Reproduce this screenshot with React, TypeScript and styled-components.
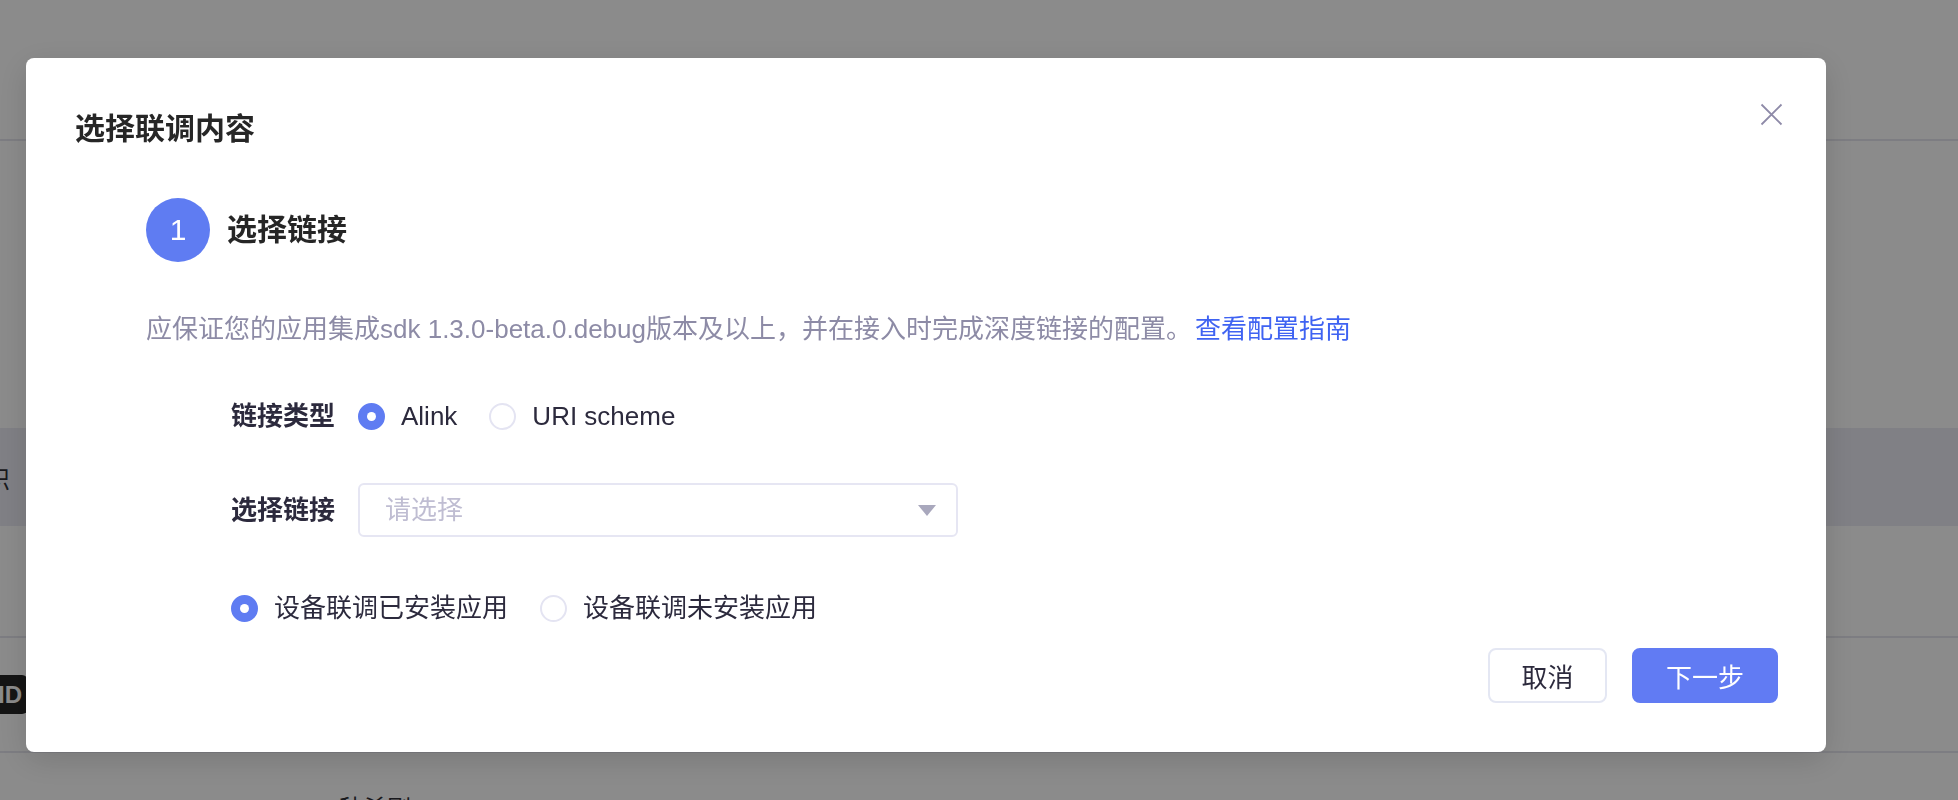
import React from "react";
import styled, { createGlobalStyle } from "styled-components";

const FONT = `"Liberation Sans", "Noto Sans CJK SC", sans-serif`;

const GlobalStyle = createGlobalStyle`
  html, body { margin: 0; padding: 0; background: #ffffff; }
  body { font-family: ${FONT}; overflow: hidden; }
  * { box-sizing: border-box; }
`;

/* ---------- background page ---------- */
const Page = styled.div`
  width: 1958px;
  height: 800px;
  display: flex;
  flex-direction: column;
  background: #ffffff;
  overflow: hidden;
`;

const PageHeader = styled.div`
  height: 141px;
  flex: none;
  border-bottom: 2px solid #e6e6ee;
`;

const PageGap = styled.div<{ $h: number }>`
  height: ${(p) => p.$h}px;
  flex: none;
`;

const TableHead = styled.div`
  height: 98px;
  flex: none;
  background: #ebebf4;
  display: flex;
  align-items: center;
  font-size: 24px;
  color: #2f2f36;
`;

const HeadCell = styled.span`
  margin-left: -38px;
  white-space: nowrap;
`;

const TableRow = styled.div<{ $h: number }>`
  height: ${(p) => p.$h}px;
  flex: none;
  border-bottom: 2px solid #e6e6ee;
  display: flex;
  align-items: center;
`;

const Badge = styled.span`
  margin-left: -48px;
  height: 39px;
  padding: 0 6px 0 10px;
  border-radius: 6px;
  background: #262626;
  color: #ffffff;
  font-weight: 700;
  font-size: 24px;
  line-height: 39px;
`;

const LastRow = styled.div`
  flex: none;
  display: flex;
  padding-top: 40px;
  font-size: 24px;
  line-height: 32px;
  color: #2f2f36;
`;

const Cell = styled.span<{ $w: number }>`
  width: ${(p) => p.$w}px;
  flex: none;
  white-space: nowrap;
`;

const Mask = styled.div`
  position: fixed;
  inset: 0;
  background: rgba(0, 0, 0, 0.455);
`;

/* ---------- modal ---------- */
const Dialog = styled.div`
  position: fixed;
  left: 26px;
  top: 58px;
  width: 1800px;
  height: 694px;
  background: #ffffff;
  border-radius: 8px;
  box-shadow: 0 8px 32px rgba(0, 0, 0, 0.14);
  display: flex;
  flex-direction: column;
  font-family: ${FONT};
`;

const Header = styled.div`
  padding: 50px 0 0 49px;
`;

const Title = styled.h2`
  margin: 0;
  font-size: 30px;
  line-height: 42px;
  font-weight: 600;
  color: #262626;
`;

const CloseButton = styled.button`
  position: absolute;
  top: 45px;
  right: 43px;
  width: 23px;
  height: 23px;
  padding: 0;
  border: none;
  background: transparent;
  cursor: pointer;
  display: flex;
`;

const Body = styled.div`
  padding-left: 120px;
  display: flex;
  flex-direction: column;
`;

const StepRow = styled.div`
  margin-top: 48px;
  display: flex;
  align-items: center;
  gap: 17px;
`;

const StepCircle = styled.div`
  width: 64px;
  height: 64px;
  border-radius: 50%;
  background: #5f7cf2;
  color: #ffffff;
  font-size: 30px;
  display: flex;
  align-items: center;
  justify-content: center;
`;

const StepTitle = styled.div`
  font-size: 30px;
  line-height: 42px;
  font-weight: 600;
  color: #262626;
`;

const Description = styled.p`
  margin: 49px 0 0;
  font-size: 26px;
  line-height: 36px;
  color: #8d8ba6;
  white-space: nowrap;
`;

const Link = styled.a`
  color: #3f63f2;
  text-decoration: none;
  cursor: pointer;
  margin-left: 3px;
`;

const Form = styled.div`
  margin-top: 42px;
  padding-left: 85px;
  display: flex;
  flex-direction: column;
`;

const FormRow = styled.div<{ $mt?: number }>`
  height: 54px;
  margin-top: ${(p) => p.$mt ?? 0}px;
  display: flex;
  align-items: center;
`;

const Label = styled.div`
  width: 104px;
  margin-right: 23px;
  font-size: 26px;
  line-height: 36px;
  font-weight: 600;
  color: #2c2a3d;
  white-space: nowrap;
`;

const RadioGroup = styled.div`
  display: flex;
  align-items: center;
  gap: 32px;
`;

const RadioItem = styled.label`
  display: flex;
  align-items: center;
  gap: 16px;
  font-size: 26px;
  line-height: 36px;
  color: #2c2a3d;
  cursor: pointer;
  white-space: nowrap;
`;

const RadioDot = styled.span<{ $checked: boolean }>`
  width: 27px;
  height: 27px;
  border-radius: 50%;
  flex: none;
  display: flex;
  align-items: center;
  justify-content: center;
  background: ${(p) => (p.$checked ? "#5f7cf2" : "#ffffff")};
  border: 2px solid ${(p) => (p.$checked ? "#5f7cf2" : "#e4e4f2")};
  &::after {
    content: "";
    width: 9px;
    height: 9px;
    border-radius: 50%;
    background: #ffffff;
    display: ${(p) => (p.$checked ? "block" : "none")};
  }
`;

const Select = styled.div`
  width: 600px;
  height: 54px;
  border: 2px solid #e6e6f3;
  border-radius: 6px;
  display: flex;
  align-items: center;
  justify-content: space-between;
  padding: 0 20px 0 25px;
  cursor: pointer;
`;

const Placeholder = styled.span`
  font-size: 26px;
  line-height: 36px;
  color: #bfbdd2;
`;

const Footer = styled.div`
  margin-top: 13px;
  padding-right: 48px;
  display: flex;
  justify-content: flex-end;
  gap: 25px;
`;

const Button = styled.button<{ $primary?: boolean }>`
  height: 55px;
  min-width: ${(p) => (p.$primary ? 146 : 119)}px;
  padding: 0 24px;
  border-radius: 8px;
  font-family: ${FONT};
  font-size: 26px;
  cursor: pointer;
  border: 2px solid ${(p) => (p.$primary ? "#617bf3" : "#e4e7f3")};
  background: ${(p) => (p.$primary ? "#617bf3" : "#ffffff")};
  color: ${(p) => (p.$primary ? "#ffffff" : "#2c2a3d")};
`;

const Radio = ({ checked, children }: { checked: boolean; children: React.ReactNode }) => (
  <RadioItem>
    <RadioDot $checked={checked} />
    {children}
  </RadioItem>
);

export default function App() {
  return (
    <>
      <GlobalStyle />
      <Page>
        <PageHeader />
        <PageGap $h={287} />
        <TableHead>
          <HeadCell>标识</HeadCell>
        </TableHead>
        <TableRow $h={112} />
        <TableRow $h={115}>
          <Badge>OAID</Badge>
        </TableRow>
        <LastRow>
          <Cell $w={339} />
          <Cell $w={834}>秒杀刚</Cell>
          <Cell $w={400}>2021-04-20 15:53:33</Cell>
        </LastRow>
      </Page>
      <Mask />
      <Dialog>
        <Header>
          <Title>选择联调内容</Title>
        </Header>
        <CloseButton aria-label="关闭">
          <svg width="23" height="23" viewBox="0 0 23 23">
            <path d="M1.5 1.5 L21.5 21.5 M21.5 1.5 L1.5 21.5" stroke="#8e8aa8" strokeWidth="1.8" fill="none" />
          </svg>
        </CloseButton>
        <Body>
          <StepRow>
            <StepCircle>1</StepCircle>
            <StepTitle>选择链接</StepTitle>
          </StepRow>
          <Description>
            应保证您的应用集成sdk 1.3.0-beta.0.debug版本及以上，并在接入时完成深度链接的配置。
            <Link>查看配置指南</Link>
          </Description>
          <Form>
            <FormRow>
              <Label>链接类型</Label>
              <RadioGroup>
                <Radio checked>Alink</Radio>
                <Radio checked={false}>URI scheme</Radio>
              </RadioGroup>
            </FormRow>
            <FormRow $mt={40}>
              <Label>选择链接</Label>
              <Select>
                <Placeholder>请选择</Placeholder>
                <svg width="18" height="11" viewBox="0 0 18 11">
                  <path d="M0 0 L18 0 L9 11 Z" fill="#a9a8bd" />
                </svg>
              </Select>
            </FormRow>
            <FormRow $mt={44}>
              <RadioGroup>
                <Radio checked>设备联调已安装应用</Radio>
                <Radio checked={false}>设备联调未安装应用</Radio>
              </RadioGroup>
            </FormRow>
          </Form>
        </Body>
        <Footer>
          <Button>取消</Button>
          <Button $primary>下一步</Button>
        </Footer>
      </Dialog>
    </>
  );
}
